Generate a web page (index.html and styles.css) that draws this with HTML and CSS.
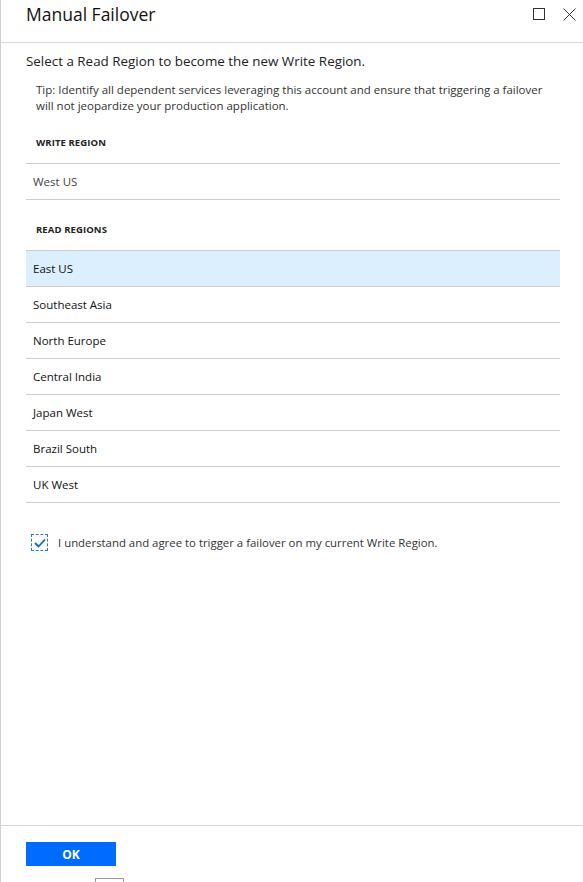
FILE: index.html
```html
<!DOCTYPE html>
<html lang="en">
<head>
<meta charset="utf-8">
<title>Manual Failover</title>
<link rel="stylesheet" href="styles.css">
</head>
<body>
<div class="panel">
  <header class="panel-header">
    <h1 class="panel-title">Manual Failover</h1>
    <div class="panel-actions">
      <svg class="icon" width="12" height="12" viewBox="0 0 12 12"><rect x="0.5" y="0.5" width="11" height="11" fill="none" stroke="#333" stroke-width="1"/></svg>
      <svg class="icon" width="13" height="13" viewBox="0 0 13 13"><path d="M0.5 0.5 L12.5 12.5 M12.5 0.5 L0.5 12.5" stroke="#333" stroke-width="1" fill="none"/></svg>
    </div>
  </header>
  <main class="panel-body">
    <p class="intro">Select a Read Region to become the new Write Region.</p>
    <p class="tip">Tip: Identify all dependent services leveraging this account and ensure that triggering a failover<br>will not jeopardize your production application.</p>

    <div class="section-label">WRITE REGION</div>
    <ul class="region-list">
      <li class="region write">West US</li>
    </ul>

    <div class="section-label">READ REGIONS</div>
    <ul class="region-list">
      <li class="region selected">East US</li>
      <li class="region">Southeast Asia</li>
      <li class="region">North Europe</li>
      <li class="region">Central India</li>
      <li class="region">Japan West</li>
      <li class="region">Brazil South</li>
      <li class="region">UK West</li>
    </ul>

    <label class="agree">
      <span class="checkbox">
        <svg width="12" height="10" viewBox="0 0 12 10"><path d="M1 5 L4.5 8.5 L11 1.5" stroke="#0a64d8" stroke-width="1.8" fill="none"/></svg>
      </span>
      <span class="agree-text">I understand and agree to trigger a failover on my current Write Region.</span>
    </label>
  </main>
  <footer class="panel-footer">
    <button class="btn-ok" type="button">OK</button>
    <div class="peek"></div>
  </footer>
</div>
</body>
</html>
```

FILE: styles.css
```css
* { box-sizing: border-box; }
html, body { margin: 0; padding: 0; height: 100%; overflow: hidden; background: #fff; }
body { font-family: "Open Sans", "Noto Sans", sans-serif; color: #222; }

.panel {
  height: 882px;
  border-left: 1px solid #cfcfcf;
  display: flex;
  flex-direction: column;
  overflow: hidden;
}

.panel-header {
  height: 43px;
  border-bottom: 1px solid #d6d6d6;
  display: flex;
  align-items: flex-start;
  justify-content: space-between;
  padding: 0 7px 0 25px;
  flex: none;
}
.panel-title {
  margin: 0;
  padding-top: 2px;
  font-size: 17.5px;
  line-height: 24px;
  font-weight: 400;
  color: #111;
}
.panel-actions {
  display: flex;
  gap: 18px;
  padding-top: 8px;
}
.icon { display: block; }

.panel-body {
  flex: 1;
  padding: 0 23px 0 25px;
}
.intro {
  margin: 9px 0 0;
  font-size: 13.4px;
  line-height: 18px;
  color: #222;
}
.tip {
  margin: 12px 0 0;
  padding-left: 10px;
  font-size: 11.5px;
  line-height: 16px;
  color: #333;
  white-space: nowrap;
}
.section-label {
  margin: 22px 0 13px;
  padding-left: 10px;
  font-size: 9.5px;
  line-height: 14px;
  font-weight: 700;
  color: #222;
  letter-spacing: 0.1px;
}
.region-list {
  list-style: none;
  margin: 0;
  padding: 0;
  border-top: 1px solid #cdcdcd;
}
.region {
  height: 36px;
  border-bottom: 1px solid #cdcdcd;
  padding-left: 7px;
  display: flex;
  align-items: center;
  font-size: 11.5px;
  color: #111;
}
.region.write { color: #444; }
.region.selected { background: #dbefff; }

.section-label + .region-list + .section-label { margin-top: 23px; }

.agree {
  display: flex;
  align-items: center;
  margin-top: 31px;
  padding-left: 5px;
}
.checkbox {
  width: 17px;
  height: 17px;
  border: 1px dashed #2a7ad8;
  display: flex;
  align-items: center;
  justify-content: center;
  flex: none;
}
.agree-text {
  margin-left: 10px;
  font-size: 11.4px;
  color: #333;
}

.panel-footer {
  flex: none;
  border-top: 1px solid #d6d6d6;
  padding: 16px 0 0 25px;
  height: 57px;
}
.btn-ok {
  display: block;
  width: 90px;
  height: 24px;
  border: 0;
  background: #006cff;
  color: #fff;
  font-family: inherit;
  font-size: 12px;
  font-weight: 700;
  padding: 0;
}
.peek {
  width: 29px;
  height: 12px;
  margin: 12px 0 0 69px;
  border: 1px solid #999;
}
```
